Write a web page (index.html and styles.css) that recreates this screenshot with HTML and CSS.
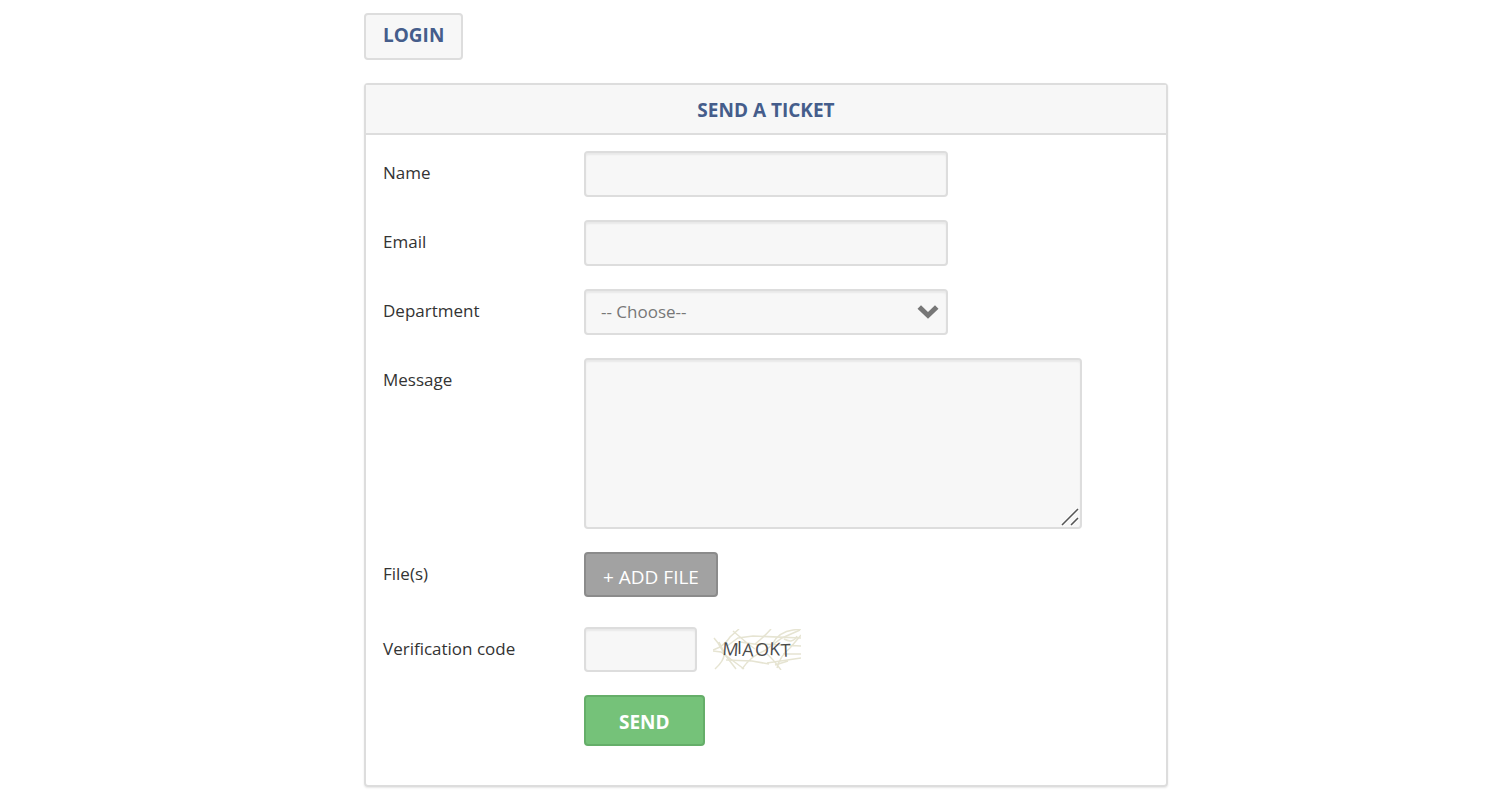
FILE: index.html
```html
<!DOCTYPE html>
<html lang="en">
<head>
    <meta charset="UTF-8">
    <meta name="viewport" content="width=device-width, initial-scale=1.0">
    <title>Send a ticket</title>
    <link rel="stylesheet" href="styles.css">
</head>
<body>
    <div class="container">
        <a href="#login" class="login-btn">LOGIN</a>

        <form class="panel">
            <h1 class="panel-title">SEND A TICKET</h1>
            <div class="panel-body">
                <div class="row">
                    <label for="name">Name</label>
                    <input type="text" id="name" class="field">
                </div>
                <div class="row">
                    <label for="email">Email</label>
                    <input type="email" id="email" class="field">
                </div>
                <div class="row">
                    <label for="department">Department</label>
                    <div class="select-wrap">
                        <select id="department" class="field">
                            <option>-- Choose--</option>
                        </select>
                        <svg class="arrow" width="22" height="14" viewBox="0 0 22 14">
                            <path d="M0.5 3.8 L4 0.3 L11 7 L18 0.3 L21.5 3.8 L11 13.8 Z" fill="#777"/>
                        </svg>
                    </div>
                </div>
                <div class="row">
                    <label for="message">Message</label>
                    <div class="message-wrap">
                        <textarea id="message" class="field message"></textarea>
                        <svg class="grip" width="18" height="18" viewBox="0 0 18 18">
                            <path d="M1 17 L17 1 M10 17 L17 10" stroke="#fff" stroke-width="3"/>
                            <path d="M1 17 L17 1 M10 17 L17 10" stroke="#555" stroke-width="1.6"/>
                        </svg>
                    </div>
                </div>
                <div class="row files-row">
                    <span class="label">File(s)</span>
                    <button type="button" class="add-btn">+ ADD FILE</button>
                </div>
                <div class="row">
                    <label for="code">Verification code</label>
                    <div class="captcha">
                        <input type="text" id="code" class="field code">
                        <svg width="88" height="41" viewBox="0 0 88 41">
                            <g fill="none" stroke="#e6e4d2" stroke-width="1.5">
                                <path d="M0 21 L7 18 Q14 13 17 8 L26 0 M2 40 Q12 31 11 24 L5 14 L1 9 M6 13 L13 27 L23 40"/>
                                <path d="M0 22 L8 23 L31 40 M14 17 L25 9 L40 7 L88 9 M20 2 L34 14 L42 20 M27 13 L48 16"/>
                                <path d="M42 15 Q51 8 58 0 M13 31 L39 32 L56 35 M29 40 Q38 27 51 22 L69 9 L87 1"/>
                                <path d="M48 15 L88 17 M64 39 Q67 27 77 19 L88 6 M54 25 Q60 30 68 41 M54 34 L88 29"/>
                                <path d="M60 14 Q66 3 80 1 L88 0 M62 36 L75 32 M70 25 L88 25 M71 10 Q80 15 84 7"/>
                            </g>
                            <g class="captcha-text">
                                <text x="9" y="26" transform="rotate(4 9 26)">M</text>
                                <text x="24" y="25">I</text>
                                <text x="29" y="27" transform="rotate(3 29 27)">A</text>
                                <text x="42" y="27">O</text>
                                <text x="56" y="26" transform="rotate(3 56 26)">K</text>
                                <text x="68" y="28" transform="rotate(-2 68 28)">T</text>
                            </g>
                        </svg>
                    </div>
                </div>
                <div class="row">
                    <span class="label"></span>
                    <button type="submit" class="send-btn">SEND</button>
                </div>
            </div>
        </form>
    </div>
</body>
</html>
```
FILE: styles.css
```css
* {
    box-sizing: border-box;
}

body {
    margin: 0;
    padding: 13px 0 11px 36px;
    background: #fff;
    color: #333;
    font-family: 'Open Sans', sans-serif;
    font-size: 17px;
    line-height: 24px;
}

.container {
    width: 100%;
    max-width: 804px;
    margin: 0 auto;
}

/* Login link */
.login-btn {
    display: inline-block;
    vertical-align: top;
    margin-bottom: 23px;
    padding: 8px 17px 11px;
    border: 2px solid #ddd;
    border-radius: 4px;
    background: #f7f7f7;
    color: #455d8b;
    font-size: 19px;
    font-weight: 700;
    text-decoration: none;
}

/* Panel */
.panel {
    border: 2px solid #ddd;
    border-radius: 4px;
    box-shadow: 0 1px 2px rgba(0, 0, 0, 0.1);
}

.panel-title {
    margin: 0;
    padding: 13px 12px 11px;
    border-bottom: 2px solid #ddd;
    background: #f7f7f7;
    color: #455d8b;
    font-size: 19px;
    font-weight: 700;
    text-align: center;
}

.panel-body {
    display: flex;
    flex-direction: column;
    gap: 23px;
    padding: 16px 17px 39px;
}

.row {
    display: grid;
    grid-template-columns: 201px 1fr;
    align-items: start;
    justify-items: start;
}

.row label,
.row .label {
    padding-top: 10px;
}

.files-row {
    margin-bottom: 7px;
}

/* Fields */
.field {
    display: block;
    width: 100%;
    max-width: 364px;
    height: 46px;
    padding: 0 15px;
    border: 2px solid #ddd;
    border-radius: 4px;
    background: #f7f7f7;
    box-shadow: inset 0 2px 2px rgba(0, 0, 0, 0.06);
    color: #777;
    font-family: inherit;
    font-size: 17px;
    outline: none;
}

.select-wrap,
.message-wrap {
    position: relative;
    width: 100%;
    max-width: 364px;
}

.message-wrap {
    max-width: 498px;
}

select.field {
    appearance: none;
    padding-bottom: 2px;
}

.arrow {
    position: absolute;
    top: 16px;
    right: 9px;
    pointer-events: none;
}

.field.message {
    max-width: none;
    height: 171px;
    padding: 10px 15px;
    resize: none;
}

.grip {
    position: absolute;
    right: 3px;
    bottom: 3px;
    pointer-events: none;
}

.captcha {
    display: flex;
    align-items: center;
    gap: 16px;
}

.field.code {
    width: 113px;
    height: 45px;
}

.captcha-text {
    fill: #4a4a4a;
    font-family: 'Open Sans', sans-serif;
    font-size: 18px;
    font-weight: 500;
}

/* Buttons */
.add-btn,
.send-btn {
    border: 2px solid #8b8b8b;
    border-radius: 4px;
    background: #a2a2a2;
    color: #fff;
    font-family: inherit;
    font-size: 19px;
    cursor: pointer;
}

.add-btn {
    height: 45px;
    padding: 4px 17px 0;
}

.send-btn {
    height: 51px;
    padding: 2px 33px 0;
    border-color: #65ae69;
    background: #75c279;
    font-weight: 700;
}
```
